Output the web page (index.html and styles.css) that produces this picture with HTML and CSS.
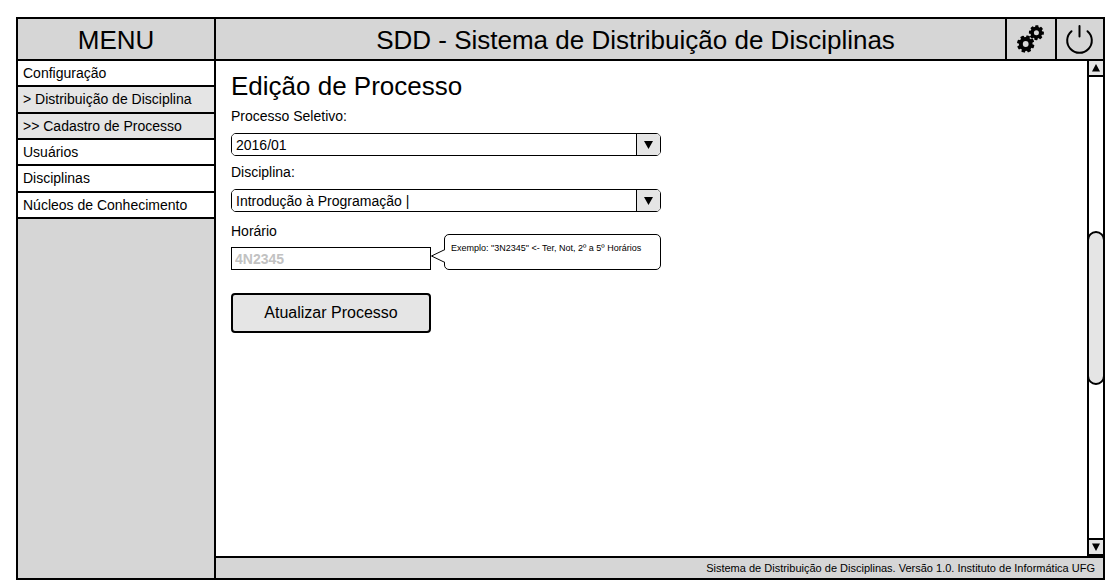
FILE: index.html
```html
<!DOCTYPE html>
<html lang="pt-BR">
<head>
<meta charset="utf-8">
<title>SDD - Sistema de Distribuição de Disciplinas</title>
<link rel="stylesheet" href="styles.css">
</head>
<body>
<div class="app">
  <aside class="sidebar">
    <h2 class="sidebar-title">MENU</h2>
    <nav class="menu">
      <a class="menu-item" href="#configuracao">Configuração</a>
      <a class="menu-item active" href="#distribuicao">&gt; Distribuição de Disciplina</a>
      <a class="menu-item active" href="#cadastro">&gt;&gt; Cadastro de Processo</a>
      <a class="menu-item" href="#usuarios">Usuários</a>
      <a class="menu-item" href="#disciplinas">Disciplinas</a>
      <a class="menu-item" href="#nucleos">Núcleos de Conhecimento</a>
    </nav>
  </aside>
  <div class="main">
    <header class="header">
      <h1 class="header-title">SDD - Sistema de Distribuição de Disciplinas</h1>
      <button class="header-button" type="button" aria-label="Configurações">
        <svg class="header-icon" viewBox="0 0 30 30" aria-hidden="true">
          <defs>
            <g id="teeth">
              <rect x="-1.9" y="-8.7" width="3.8" height="17.4" rx="0.8"/>
              <rect x="-1.9" y="-8.7" width="3.8" height="17.4" rx="0.8" transform="rotate(45)"/>
              <rect x="-1.9" y="-8.7" width="3.8" height="17.4" rx="0.8" transform="rotate(90)"/>
              <rect x="-1.9" y="-8.7" width="3.8" height="17.4" rx="0.8" transform="rotate(135)"/>
              <circle r="6.9"/>
            </g>
          </defs>
          <use href="#teeth" transform="translate(9.7 20) rotate(18)"/>
          <circle class="gear-hole" cx="9.7" cy="20" r="2.9"/>
          <use href="#teeth" transform="translate(20.4 8.7) rotate(4) scale(0.86)"/>
          <circle class="gear-hole" cx="20.4" cy="8.7" r="2.5"/>
        </svg>
      </button>
      <button class="header-button" type="button" aria-label="Sair">
        <svg class="header-icon" viewBox="0 0 30 30" aria-hidden="true">
          <path class="power-line" d="M6.5 7.2A12.3 12.3 0 1 0 22.5 7.2M14.5 2V12.5"/>
        </svg>
      </button>
    </header>
    <div class="body">
      <main class="content">
        <h2 class="page-title">Edição de Processo</h2>
        <form class="form">
          <label class="label" for="processo">Processo Seletivo:</label>
          <div class="select-box">
            <select class="select" id="processo"><option>2016/01</option></select>
            <span class="select-arrow"><svg class="arrow" viewBox="0 0 10 8" aria-hidden="true"><path d="M0 0H9L4.5 8Z"/></svg></span>
          </div>
          <label class="label" for="disciplina">Disciplina:</label>
          <div class="select-box">
            <select class="select" id="disciplina"><option>Introdução à Programação |</option></select>
            <span class="select-arrow"><svg class="arrow" viewBox="0 0 10 8" aria-hidden="true"><path d="M0 0H9L4.5 8Z"/></svg></span>
          </div>
          <div class="schedule">
            <div class="schedule-field">
              <label class="label" for="horario">Horário</label>
              <input class="input" id="horario" type="text" placeholder="4N2345">
            </div>
            <div class="hint">
              <svg class="hint-tail" viewBox="0 0 14 14" aria-hidden="true"><path d="M14 0.5L0.5 7L14 13.5"/></svg>
              <p class="hint-text">Exemplo: "3N2345" &lt;- Ter, Not, 2º a 5º Horários</p>
            </div>
          </div>
          <button class="submit" type="button">Atualizar Processo</button>
        </form>
      </main>
      <div class="scrollbar">
        <button class="scroll-button up" type="button" aria-label="Rolar para cima"><svg class="arrow" viewBox="0 0 10 8" aria-hidden="true"><path d="M1 7.5H9L5 0Z"/></svg></button>
        <div class="track"><div class="thumb"></div></div>
        <button class="scroll-button down" type="button" aria-label="Rolar para baixo"><svg class="arrow" viewBox="0 0 10 8" aria-hidden="true"><path d="M1 0.5H9L5 8Z"/></svg></button>
      </div>
    </div>
    <footer class="footer">Sistema de Distribuição de Disciplinas. Versão 1.0. Instituto de Informática UFG</footer>
  </div>
</div>
</body>
</html>
```
FILE: styles.css
```css
* { box-sizing: border-box; }
body {
  margin: 0;
  min-height: 100vh;
  padding: 17px 12px 8px 16px;
  display: flex;
  background: #fff;
  color: #000;
  font: 14px/16px "Liberation Sans", Arial, sans-serif;
}
button, input, select { font: inherit; color: inherit; margin: 0; }
h1, h2, p { margin: 0; font-weight: 400; }
.app {
  flex: 1;
  display: grid;
  grid-template-columns: 198px 1fr;
  border: 2px solid #000;
}
.sidebar { background: #d6d6d6; border-right: 2px solid #000; }
.sidebar-title, .header { height: 42px; border-bottom: 2px solid #000; }
.sidebar-title, .header-title { font-size: 26px; line-height: 42px; text-align: center; }
.menu { display: grid; grid-template-rows: repeat(6, 1fr); height: 158px; }
.menu-item {
  display: flex;
  align-items: center;
  padding-left: 5px;
  background: #fff;
  border-bottom: 2px solid #000;
  color: #000;
  text-decoration: none;
}
.menu-item.active { background: #e5e5e5; }
.main { display: flex; flex-direction: column; min-width: 0; }
.header { display: flex; background: #d6d6d6; }
.header-title { flex: 1; padding-left: 50px; }
.header-button {
  width: 50px;
  padding: 0;
  border: 0;
  border-left: 2px solid #000;
  background: none;
  display: flex;
  align-items: center;
  justify-content: center;
}
.header-button:last-child { width: 48px; }
.header-icon { width: 30px; height: 30px; }
.gear-hole { fill: #d6d6d6; }
.power-line { fill: none; stroke: #000; stroke-width: 2; stroke-linecap: round; }
.body { flex: 1; display: flex; }
.content { flex: 1; padding: 10px 15px; }
.page-title { font-size: 26px; line-height: 30px; }
.form { max-width: 430px; padding-top: 7px; }
.label { display: block; }
.select-box {
  display: grid;
  grid-template-columns: 1fr 24px;
  height: 23px;
  margin: 9px 0 8px;
  border: 1px solid #000;
  border-radius: 5px;
  overflow: hidden;
}
.select {
  grid-area: 1 / 1 / 2 / 3;
  appearance: none;
  border: 0;
  padding: 0 28px 0 4px;
  background: #fff;
}
.select-arrow {
  grid-area: 1 / 2;
  display: flex;
  align-items: center;
  justify-content: center;
  border-left: 1px solid #000;
  background: #e5e5e5;
  pointer-events: none;
}
.arrow { display: block; width: 10px; height: 8px; }
.schedule { display: flex; align-items: flex-end; padding-top: 3px; }
.schedule-field { flex: 0 0 200px; }
.input {
  display: block;
  width: 100%;
  height: 23px;
  margin-top: 8px;
  padding: 0 3px;
  border: 1px solid #000;
}
.input::placeholder { color: #c2c2c2; font-weight: 700; opacity: 1; }
.hint {
  position: relative;
  flex: 1;
  height: 36px;
  margin-left: 13px;
  padding: 8px 6px;
  border: 1px solid #000;
  border-radius: 5px;
  background: #fff;
}
.hint-tail { position: absolute; left: -14px; top: 14px; width: 14px; height: 14px; }
.hint-tail path { fill: #fff; stroke: #000; }
.hint-text { font-size: 9px; line-height: 10px; white-space: nowrap; }
.submit {
  display: block;
  width: 200px;
  height: 40px;
  margin-top: 23px;
  border: 2px solid #000;
  border-radius: 4px;
  background: #e5e5e5;
  font-size: 16px;
}
.scrollbar {
  width: 16px;
  display: flex;
  flex-direction: column;
  border-left: 2px solid #000;
}
.scroll-button {
  height: 16px;
  padding: 0;
  border: 0;
  background: #e5e5e5;
  display: flex;
  align-items: center;
  justify-content: center;
}
.up { border-bottom: 2px solid #000; }
.down { height: 18px; border-top: 2px solid #000; border-bottom: 2px solid #000; }
.track { flex: 1; display: flex; flex-direction: column; }
.track::before { content: ""; flex: 155; }
.track::after { content: ""; flex: 154; }
.thumb {
  flex: 150;
  margin: 0 -2px;
  border: 2px solid #000;
  border-radius: 9px;
  background: #e5e5e5;
}
.footer {
  height: 22px;
  padding-right: 8px;
  border-top: 2px solid #000;
  background: #d6d6d6;
  font-size: 11px;
  line-height: 20px;
  text-align: right;
}
```
